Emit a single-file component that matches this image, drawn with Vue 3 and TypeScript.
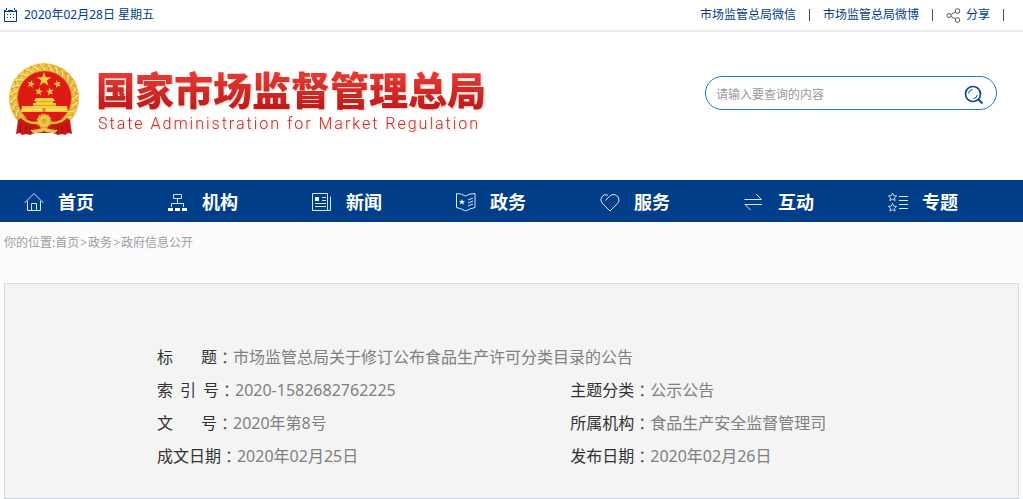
<script setup lang="ts">
import { ref } from 'vue'

interface NavItem {
  label: string
  icon: string
}

interface MetaItem {
  parts: string[]
  value: string
  wide?: boolean
}

const keyword = ref<string>('')

const navItems: NavItem[] = [
  { label: '首页', icon: 'home' },
  { label: '机构', icon: 'org' },
  { label: '新闻', icon: 'news' },
  { label: '政务', icon: 'gov' },
  { label: '服务', icon: 'heart' },
  { label: '互动', icon: 'swap' },
  { label: '专题', icon: 'topic' },
]

const metaItems: MetaItem[] = [
  { parts: ['标', '题'], value: '市场监管总局关于修订公布食品生产许可分类目录的公告', wide: true },
  { parts: ['索', '引', '号'], value: '2020-1582682762225' },
  { parts: ['主题分类'], value: '公示公告' },
  { parts: ['文', '号'], value: '2020年第8号' },
  { parts: ['所属机构'], value: '食品生产安全监督管理司' },
  { parts: ['成文日期'], value: '2020年02月25日' },
  { parts: ['发布日期'], value: '2020年02月26日' },
]

const leaves: number[] = Array.from({ length: 21 }, (_, i) => -130 + i * 13)
</script>

<template>
  <div class="page">
    <div class="topbar">
      <div class="today">
        <svg viewBox="0 0 14 14" width="14" height="14" aria-hidden="true">
          <path d="M.5 2v11.500h12V2M0 2.500h2M4 2.500h5M11 2.500h2M2.500 0v2M10.500 0v2M1 3.500h11" fill="none" stroke="#003e8a" />
          <path d="M3 6h1v1H3zM6 6h1v1H6zM9 6h1v1H9zM3 9h1v1H3zM6 9h1v1H6zM9 9h1v1H9z" fill="#003e8a" />
        </svg>
        <span>2020年02月28日 星期五</span>
      </div>
      <div class="links">
        <a href="#">市场监管总局微信</a>
        <i class="sep teal"></i>
        <a href="#">市场监管总局微博</a>
        <i class="sep purple"></i>
        <a href="#" class="share">
          <svg viewBox="0 0 15 15" width="15" height="15" aria-hidden="true">
            <g fill="none" stroke="#555">
              <circle cx="3" cy="7.500" r="2" /><circle cx="11.500" cy="3" r="2.300" /><circle cx="11.500" cy="12" r="2.300" />
              <path d="M4.800 6.500l4.700-2.400M4.800 8.500l4.700 2.400" />
            </g>
          </svg>
          <span>分享</span>
        </a>
        <i class="sep teal"></i>
      </div>
    </div>

    <header class="header">
      <a href="#" class="brand">
        <svg class="emblem" viewBox="0 0 70 73" width="70" height="73" aria-hidden="true">
          <defs>
            <linearGradient id="gold" x1="0" y1="0" x2="1" y2="1">
              <stop offset="0" stop-color="#f5d860" /><stop offset=".5" stop-color="#e6b23a" /><stop offset="1" stop-color="#f2c93f" />
            </linearGradient>
          </defs>
          <circle cx="35" cy="35" r="35" fill="url(#gold)" />
          <g fill="none" stroke="#d09a30" stroke-width=".8">
            <path v-for="a in leaves" :key="a" d="M29 1.500q4 1.500 5 6M34 4q3-1 4-3" :transform="`rotate(${a} 35 35)`" />
          </g>
          <g fill="none" stroke="#fbe88a" stroke-width="1">
            <path v-for="a in leaves" :key="a" d="M31 2q4 1.500 5 5" :transform="`rotate(${a} 35 35)`" />
          </g>
          <circle cx="35.500" cy="35" r="27" fill="#df1914" stroke="#c98f22" stroke-width=".6" />
          <g fill="#f6cf3e">
            <path d="M35 9l1.800 5.300h5.400l-4.400 3.200 1.700 5.300-4.500-3.200-4.500 3.200 1.700-5.300-4.400-3.200h5.400z" />
            <path d="M0-4.200l1 2.900h3L1.600.5l.9 3L0 1.700l-2.500 1.800.9-3L-4-1.300h3z" transform="translate(22 21) rotate(15)" />
            <path d="M0-4.200l1 2.900h3L1.600.5l.9 3L0 1.700l-2.500 1.800.9-3L-4-1.300h3z" transform="translate(48.500 21) rotate(-15)" />
            <path d="M0-4.200l1 2.900h3L1.600.5l.9 3L0 1.700l-2.500 1.800.9-3L-4-1.300h3z" transform="translate(30 28.500) rotate(10)" />
            <path d="M0-4.200l1 2.900h3L1.600.5l.9 3L0 1.700l-2.500 1.800.9-3L-4-1.300h3z" transform="translate(41 28.500) rotate(-10)" />
            <path d="M27 35h17l2 3h-2v2h3v3h11l1 6H12l1-6h11v-3h3v-2h-2z" />
          </g>
          <path d="M26 38.500h19M24 42.500h23" stroke="#d39720" stroke-width=".8" />
          <path d="M13 46.500h45" stroke="#fae48a" stroke-width=".8" />
          <path d="M33.500 45h3v4h-3z" fill="#d98d22" />
          <path d="M9 57q4-4 10-1 8 0 10 3h12q2-3 10-3 6-3 10 1l2 14-4-1-3 2-3-1-4 1-5-2H26l-5 2-4-1-4 1-2-2-4 1z" fill="#c81a14" />
          <path d="M12 60l-1 9M17 63v7M21 64l1 6M58 60l1 9M53 63v7M49 64l-1 6" stroke="#930f0d" fill="none" />
          <path d="M11 52q7 9 18 8M59 52q-7 9-18 8" fill="none" stroke="#e9bc3c" stroke-width="2.500" />
          <circle cx="35" cy="58" r="6.500" fill="#f0c646" stroke="#e4b232" stroke-width="2" stroke-dasharray="2 1" />
          <circle cx="35" cy="58" r="2.500" fill="#dca836" />
          <path d="M21 67q8 0 14-3 6 3 14 3l-3 3q-7 0-11-2-4 2-11 2z" fill="#ebc044" />
        </svg>
        <span class="names">
          <strong class="name-cn">国家市场监督管理总局</strong>
          <span class="name-en">State Administration for Market Regulation</span>
        </span>
      </a>
      <form class="search" @submit.prevent>
        <input v-model="keyword" type="text" placeholder="请输入要查询的内容" aria-label="请输入要查询的内容" />
        <button type="submit" aria-label="搜索">
          <svg viewBox="0 0 20 20" width="20" height="20" aria-hidden="true">
            <g fill="none" stroke="#11468f">
              <circle cx="9" cy="9" r="7.500" stroke-width="1.700" />
              <path d="M14.500 14.500l4 4" stroke-width="2" />
              <path d="M4.500 8.500q.5-3.500 4-4.200M9.500 13.700q3-.5 3.800-3.700" />
            </g>
          </svg>
        </button>
      </form>
    </header>

    <nav class="nav">
      <a v-for="item in navItems" :key="item.label" href="#" class="nav-item">
        <svg viewBox="0 0 20 20" width="20" height="20" fill="none" stroke="#dce6f3" aria-hidden="true">
          <path v-if="item.icon === 'home'" d="M.5 10L10 .5l9.500 9.500M3.500 8v9.500h13V8M7.500 17.500v-7h5v7" />
          <template v-else-if="item.icon === 'org'">
            <path d="M5.500 1.500h8v4h-8zM9.500 5.500v5M3.500 14v-3.500h12V14" />
            <path d="M0 15h5v3H0zM7 15h5v3H7zM14 15h5v3h-5z" fill="#fff" stroke="none" />
          </template>
          <template v-else-if="item.icon === 'news'">
            <path d="M.5.5h15v17H.5zM15.500 17.500h3v-14M10 4.500h4M10 7.500h4M3 10.500h11M3 13.500h11" />
            <path d="M3 4h4v4H3z" fill="#fff" stroke="none" />
          </template>
          <template v-else-if="item.icon === 'gov'">
            <path d="M.5.5q5 0 9 2.500 4-2.500 9.500-2.500v14q-5 1-9.500 3.500-4-2.500-9-3.500zM12 7l5-2M12 10l5-2M12 13l5-2" />
            <path d="M6 6l.8 2H9L7.300 9.400l.7 2.100-2-1.200-2 1.200.7-2.100L3 8h2.200z" fill="#fff" stroke="none" />
          </template>
          <path v-else-if="item.icon === 'heart'" d="M5.500 7.500l4-4.200Q12 .8 15 1.700q4 1.300 4 5.300 0 2-1.500 3.500L10 18 2 10Q-.5 6.500 2 3.500 4.500.5 8 2.200" />
          <path v-else-if="item.icon === 'swap'" d="M.5 6.500h17l-5.500-5.500M18 11.500H1l5.500 5.500" />
          <template v-else>
            <path d="M4.500 0l1.200 2.600 2.900.3-2.200 1.900.7 2.800-2.600-1.400-2.600 1.400.7-2.800L.4 2.900l2.900-.3zM4.500 10.500l1.200 2.600 2.900.3-2.200 1.900.7 2.800-2.600-1.400-2.600 1.400.7-2.800-2.200-1.900 2.900-.3z" stroke-width=".9" />
            <path d="M11 3.500h9M11 7.500h9M11 11.500h9M11 15.500h9" />
          </template>
        </svg>
        <span>{{ item.label }}</span>
      </a>
    </nav>

    <div class="crumbs">
      <span>你的位置:</span><a href="#">首页</a><span class="arrow">&gt;</span><a href="#">政务</a><span class="arrow">&gt;</span><a href="#">政府信息公开</a>
    </div>

    <main class="panel">
      <dl class="meta">
        <div v-for="item in metaItems" :key="item.parts.join('')" class="meta-row" :class="{ wide: item.wide }">
          <dt>
            <span class="label" :class="`parts-${item.parts.length}`"><span v-for="part in item.parts" :key="part">{{ part }}</span></span><span class="colon">：</span>
          </dt>
          <dd>{{ item.value }}</dd>
        </div>
      </dl>
    </main>
  </div>
</template>

<style>
body {
  margin: 0;
  background: #fcfcfc;
}
</style>

<style scoped>
.page {
  font-family: "Noto Sans", "Noto Sans CJK SC", sans-serif;
  font-size: 12px;
  color: #333;
}

a {
  color: inherit;
  text-decoration: none;
}

.topbar {
  display: flex;
  justify-content: space-between;
  align-items: center;
  height: 30px;
  padding: 0 19px 0 4px;
  background: #fff;
  border-bottom: 2px solid #ebebeb;
  line-height: 16px;
  color: #003e8a;
}

.today {
  display: flex;
  align-items: center;
  gap: 6px;
}

.links {
  display: flex;
  align-items: center;
  gap: 13px;
}

.sep {
  width: 1px;
  height: 12px;
}

.teal {
  background: #1b5a78;
}

.purple {
  background: #6f3292;
}

.share {
  display: flex;
  align-items: center;
  gap: 5px;
}

.header {
  display: flex;
  justify-content: space-between;
  align-items: flex-start;
  height: 119px;
  padding: 29px 26px 0 9px;
  background: #fff;
}

.brand {
  display: flex;
  align-items: flex-start;
  gap: 17px;
}

.emblem {
  margin-top: 2px;
}

.names {
  display: flex;
  flex-direction: column;
  filter: drop-shadow(1px 1px 1px #d8cdb9);
}

.name-cn {
  font-family: "Noto Sans CJK SC", sans-serif;
  font-size: 39px;
  font-weight: 900;
  line-height: 54px;
  background: linear-gradient(#e23a36 25%, #c3191b 85%);
  background-clip: text;
  -webkit-background-clip: text;
  color: transparent;
}

.name-en {
  padding-left: 2px;
  font-family: Roboto, sans-serif;
  font-size: 16px;
  font-weight: 300;
  line-height: 18px;
  letter-spacing: 2px;
  color: #cf2927;
}

.search {
  display: flex;
  align-items: center;
  box-sizing: border-box;
  width: 292px;
  height: 34px;
  margin-top: 15px;
  padding: 0 12px 0 10px;
  border: 1px solid #1a7ccb;
  border-radius: 17px;
  background: #fff;
}

.search input {
  flex: 1;
  min-width: 0;
  padding: 2px 0 0;
  border: 0;
  outline: 0;
  background: none;
  font: inherit;
  color: #333;
}

.search input::placeholder {
  color: #999;
}

.search button {
  display: flex;
  padding: 3px 0 0;
  border: 0;
  background: none;
  cursor: pointer;
}

.nav {
  display: flex;
  height: 42px;
  padding-right: 15px;
  background: #003e8a;
}

.nav-item {
  display: flex;
  flex: 1;
  align-items: center;
  gap: 14px;
  padding-left: 24px;
  font-size: 18px;
  font-weight: 700;
  color: #fff;
}

.nav-item svg {
  margin-top: 4px;
  overflow: visible;
}

.crumbs {
  padding: 11px 4px 30px;
  line-height: 20px;
  color: #999fa8;
}

.arrow {
  padding: 0 1px;
}

.panel {
  margin: 0 4px;
  padding: 57px 0 25px;
  border: 1px solid #cfdcec;
  border-bottom-color: #d0d4da;
  background: #f4f4f4;
}

.meta {
  display: grid;
  grid-template-columns: 12fr 13fr;
  margin: 0;
  padding-left: 15%;
  font-size: 16px;
  line-height: 33px;
}

.meta-row {
  display: flex;
}

.wide {
  grid-column: 1 / -1;
}

.meta dt {
  display: flex;
}

.meta dd {
  margin: 0;
  color: #808080;
}

.label {
  display: flex;
}

.parts-2 {
  gap: 28px;
}

.parts-3 {
  gap: 7px;
}

.colon {
  font-family: "Noto Sans CJK JP", sans-serif;
  color: #555;
}
</style>
